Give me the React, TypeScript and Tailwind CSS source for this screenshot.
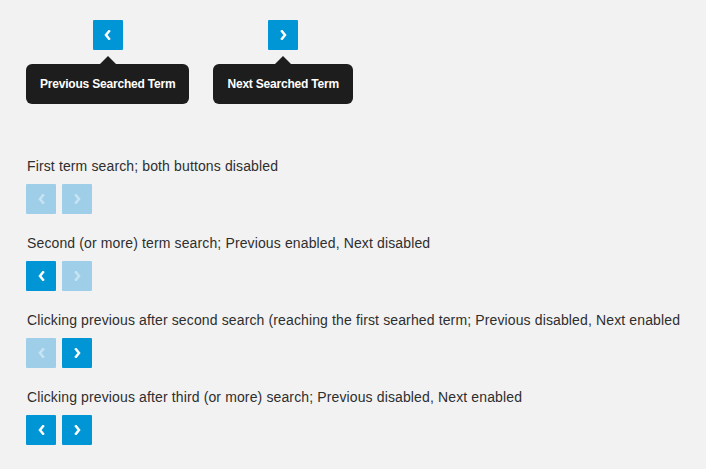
type Dir = "prev" | "next";

const Chevron = ({ dir, color }: { dir: Dir; color: string }) => (
  <svg width="7" height="10" viewBox="0 0 7 10" fill="none">
    <path
      d={dir === "prev" ? "M5 1.3 L2 5 L5 8.7" : "M2 1.3 L5 5 L2 8.7"}
      stroke={color}
      strokeWidth="2.5"
      strokeLinecap="square"
      strokeLinejoin="miter"
    />
  </svg>
);

const NavButton = ({ dir, disabled = false }: { dir: Dir; disabled?: boolean }) => (
  <button
    className={
      disabled
        ? "w-[30px] h-[30px] rounded-[1px] bg-[#9fcfe8] grid place-items-center"
        : "w-[30px] h-[30px] rounded-[1px] bg-[#0096d6] grid place-items-center"
    }
  >
    <Chevron dir={dir} color={disabled ? "#c6e4f3" : "#ffffff"} />
  </button>
);

const Tip = ({ dir, text }: { dir: Dir; text: string }) => (
  <div className="flex flex-col items-center">
    <NavButton dir={dir} />
    <div className="mt-[6px] w-0 h-0 border-l-[8px] border-r-[8px] border-b-[8px] border-l-transparent border-r-transparent border-b-[#1d1d1d]" />
    <div className="h-[40px] px-[14px] rounded-[6px] bg-[#1d1d1d] text-white text-[12px] font-bold flex items-center tracking-[-0.2px]">
      {text}
    </div>
  </div>
);

const rows: { label: string; prev: boolean; next: boolean }[] = [
  { label: "First term search; both buttons disabled", prev: true, next: true },
  { label: "Second (or more) term search; Previous enabled, Next disabled", prev: false, next: true },
  {
    label:
      "Clicking previous after second search (reaching the first searhed term; Previous disabled, Next enabled",
    prev: true,
    next: false,
  },
  { label: "Clicking previous after third (or more) search; Previous disabled, Next enabled", prev: false, next: false },
];

export default function App() {
  return (
    <div className="w-[706px] h-[469px] bg-[#f2f2f2] pl-[26px] pt-[20px] font-['Liberation_Sans',Arial,sans-serif] text-[#2e2e2e]">
      <div className="flex gap-[24px]">
        <Tip dir="prev" text="Previous Searched Term" />
        <Tip dir="next" text="Next Searched Term" />
      </div>

      <div className="mt-[52px] flex flex-col gap-[19px]">
        {rows.map((r) => (
          <div key={r.label}>
            <p className="text-[14px] leading-[20px] pl-[1px] tracking-[0.13px]">{r.label}</p>
            <div className="mt-[8px] flex gap-[6px]">
              <NavButton dir="prev" disabled={r.prev} />
              <NavButton dir="next" disabled={r.next} />
            </div>
          </div>
        ))}
      </div>
    </div>
  );
}
